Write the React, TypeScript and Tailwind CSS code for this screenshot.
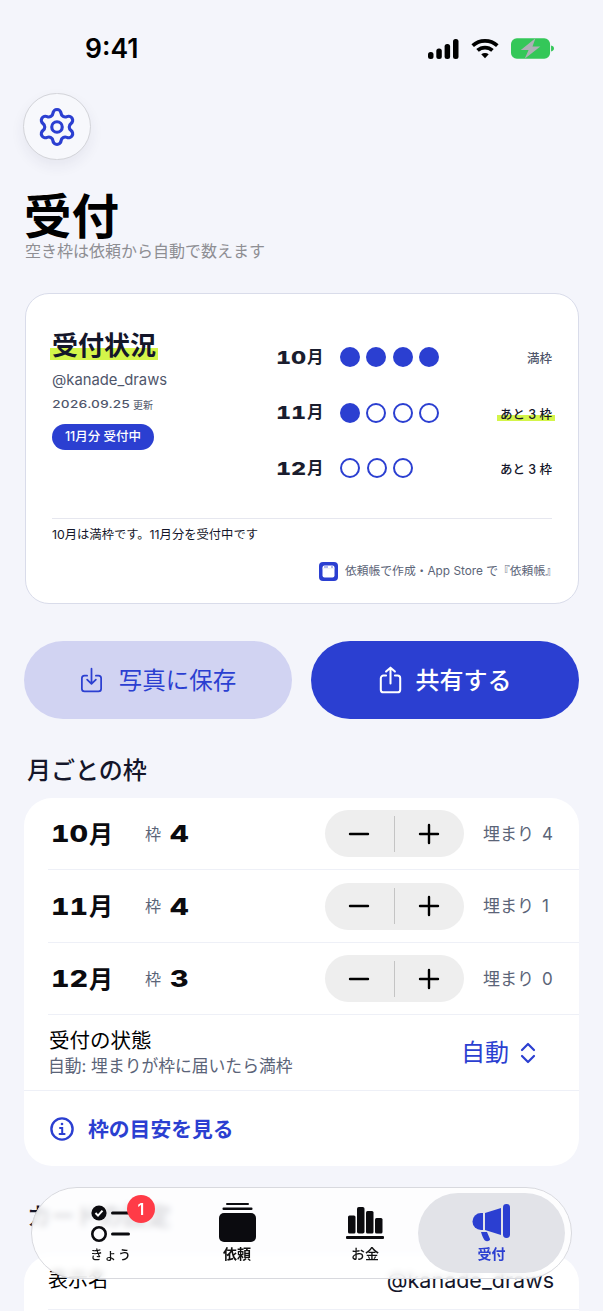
import React from "react";
import { Settings } from "lucide-react";

const sans = "font-['Inter','Noto_Sans_CJK_JP',sans-serif]";

function StatusBar() {
  return (
    <div className="h-[93px] flex items-start justify-between pl-[85px] pr-[49px] pt-[33px]">
      <span className="text-[26.5px] leading-[30px] font-semibold text-black">9:41</span>
      <div className="flex items-center gap-[12px] pt-[5px]">
        <svg width="31" height="20" viewBox="0 0 31 20" fill="#000">
          <rect x="0" y="13" width="5.5" height="7" rx="2.5" />
          <rect x="8.3" y="9.5" width="5.5" height="10.5" rx="2.5" />
          <rect x="16.6" y="5" width="5.5" height="15" rx="2.5" />
          <rect x="25" y="0" width="5.5" height="20" rx="2.5" />
        </svg>
        <svg width="28" height="21" viewBox="0 0 30 21" fill="none" stroke="#000" strokeWidth="4" strokeLinecap="butt">
          <path d="M1.8 7.4C9.2 .6 20.8 .6 28.2 7.4" />
          <path d="M7 12.6c4.6-4.2 11.4-4.2 16 0" />
          <path d="M11 16.6 15 21l4-4.4c-2.4-1.8-5.6-1.8-8 0z" fill="#000" stroke="none" />
        </svg>
        <svg width="43" height="21" viewBox="0 0 44 21">
          <rect x="0" y="0" width="40" height="21" rx="6" fill="#34c759" />
          <path d="M41 7.5c2 .4 3 1.6 3 3s-1 2.6-3 3z" fill="#34c759" />
          <path d="M25 0 10 12h8L14 21 30 8.5h-8z" fill="#aeb0b6" />
        </svg>
      </div>
    </div>
  );
}

function Dots({ filled, total }: { filled: number; total: number }) {
  return (
    <div className="flex gap-[6.5px] w-[99px]">
      {Array.from({ length: total }).map((_, i) =>
        i < filled ? (
          <span key={i} className="w-[20px] h-[20px] rounded-full bg-[#2b3fd1]" />
        ) : (
          <span key={i} className="w-[20px] h-[20px] rounded-full border-2 border-[#2b3fd1]" />
        )
      )}
    </div>
  );
}

function CardRow({ digits, filled, total, children }: { digits: string; filled: number; total: number; children: React.ReactNode }) {
  return (
    <div className="flex items-center h-[28px]">
      <div className="w-[64px] flex items-center text-[#1a1d2e] font-extrabold">
        <span className="inline-block w-[31px] origin-left scale-x-[1.3] text-[18px] tabular-nums">{digits}</span>
        <span className="text-[16.5px] font-bold">月</span>
      </div>
      <Dots filled={filled} total={total} />
      <div className="ml-auto">{children}</div>
    </div>
  );
}

function Stepper() {
  return (
    <div className="w-[139px] h-[47px] rounded-full bg-[#eeeeee] flex items-center">
      <div className="flex-1 flex justify-center pr-[2px]">
        <svg width="22" height="22" viewBox="0 0 22 22" stroke="#000" strokeWidth="2.4" strokeLinecap="round">
          <path d="M2 11h18" />
        </svg>
      </div>
      <div className="w-px h-[36px] bg-[#c4c4c4]" />
      <div className="flex-1 flex justify-center pr-[2px]">
        <svg width="22" height="22" viewBox="0 0 22 22" stroke="#000" strokeWidth="2.4" strokeLinecap="round">
          <path d="M2 11h18M11 2v18" />
        </svg>
      </div>
    </div>
  );
}

function MonthRow({ digits, cap, used, h }: { digits: string; cap: number; used: number; h: string }) {
  return (
    <div className={`${h} ml-[24px] flex items-center border-b border-[#eef0f7]`}>
      <div className="w-[97px] pl-[3px] pt-[2px] flex items-center text-[#0b0b0f] font-extrabold">
        <span className="inline-block w-[38px] origin-left scale-x-[1.25] text-[23px] tabular-nums">{digits}</span>
        <span className="text-[24px] font-bold">月</span>
      </div>
      <span className="text-[16px] text-[#5b6478] w-[25px]">枠</span>
      <span className="inline-block w-[155px] pt-[2px] origin-left scale-x-[1.25] text-[23px] font-extrabold text-[#0b0b0f] tabular-nums">{cap}</span>
      <Stepper />
      <div className="ml-[19px] pt-[2px] flex gap-[8px] text-[17px] text-[#5b6478] whitespace-nowrap">
        <span>埋まり</span>
        <span>{used}</span>
      </div>
    </div>
  );
}

function BottomNav() {
  return (
    <div className="absolute left-[31px] top-[1187px] w-[541px] h-[92px] rounded-full border border-[#d8d9de] bg-white/80 backdrop-blur-[3px] flex items-center">
      <div className="relative w-[140px] h-full flex flex-col items-center pt-[17px] pl-[18px]">
        <svg width="40" height="38" viewBox="0 0 40 38">
          <circle cx="8" cy="8" r="7.6" fill="#0b0b0f" />
          <path d="M4.5 8 7 10.6 11.5 5.6" fill="none" stroke="#fff" strokeWidth="2" />
          <rect x="20" y="6.5" width="19" height="3" rx="1.5" fill="#0b0b0f" />
          <circle cx="8" cy="29" r="6.7" fill="none" stroke="#0b0b0f" strokeWidth="2.6" />
          <rect x="20" y="27.5" width="19" height="3" rx="1.5" fill="#0b0b0f" />
        </svg>
        <span className="text-[13px] leading-[16px] font-medium text-[#111] mt-[3px] tracking-[1px]">きょう</span>
        <span className="absolute left-[95px] top-[7px] w-[28px] h-[28px] rounded-full bg-[#ff3b47] text-white text-[16px] font-semibold flex items-center justify-center">1</span>
      </div>
      <div className="w-[130px] h-full flex flex-col items-center pt-[15px]">
        <svg width="37" height="40" viewBox="0 0 37 40" fill="#0b0b0f">
          <rect x="7" y="0" width="23" height="2" rx="1" />
          <rect x="3.5" y="4.5" width="30" height="2.4" rx="1" />
          <rect x="0" y="10" width="37" height="29" rx="5" />
        </svg>
        <span className="text-[14px] leading-[16px] font-semibold text-[#111] mt-[3px]">依頼</span>
      </div>
      <div className="w-[116px] h-full flex flex-col items-center pt-[19px] pl-[10px]">
        <svg width="38" height="33" viewBox="0 0 38 33" fill="#0b0b0f">
          <rect x="2" y="8.5" width="7.5" height="18" rx="1.5" />
          <rect x="11" y="0" width="7.5" height="26.5" rx="1.8" />
          <rect x="20" y="4" width="7.5" height="22.5" rx="1.5" />
          <rect x="29" y="11" width="7.5" height="15.5" rx="1.5" />
          <rect x="0" y="29" width="38" height="3" rx="1" />
        </svg>
        <span className="text-[14px] leading-[16px] font-medium text-[#111] mt-[6px]">お金</span>
      </div>
      <div className="w-[147px] h-[80px] rounded-full bg-[#e2e3e8] flex flex-col items-center pt-[11px]">
        <svg width="39" height="38" viewBox="0 0 39 38" fill="#2b3fd1">
          <path d="M11 9H9a8.5 8.5 0 0 0 0 17h2z" />
          <path d="M13 9 29 4v27L13 26z" />
          <rect x="31" y="0" width="7" height="34" rx="3.4" />
          <path d="M9 28h6l3 7c.5 2-3.5 3-5 1.5-1.2-1-3-5-4-8.5z" />
        </svg>
        <span className="text-[14px] leading-[16px] font-semibold text-[#2b3fd1] mt-[4px]">受付</span>
      </div>
    </div>
  );
}

const mark = "bg-[linear-gradient(transparent_55%,#d4f54a_55%,#d4f54a_95%,transparent_95%)]";

export default function App() {
  return (
    <div className={`${sans} relative w-[603px] h-[1311px] overflow-hidden bg-[#f4f5fb]`}>
      <StatusBar />
      <div className="px-[24px]">
        <div className="-ml-px w-[68px] h-[67px] rounded-full border border-[#d3d4d9] bg-[#f7f8fc] flex items-center justify-center shadow-[0_6px_14px_rgba(40,45,90,0.07)]">
          <Settings size={42} strokeWidth={1.8} color="#2b3fd1" className="mr-px" />
        </div>
        <h1 className="mt-[33px] text-[47.5px] leading-[47px] font-bold text-black">受付</h1>
        <p className="mt-[2px] ml-px text-[16px] leading-[18px] text-[#8e8e93]">空き枠は依頼から自動で数えます</p>

        {/* Card */}
        <div className="mt-[33px] ml-px w-[554px] h-[311px] rounded-[24px] bg-white border border-[#d9dcea] px-[26px] pt-[37px]">
          <div className="flex h-[188px] border-b border-[#e6e7ef]">
            <div className="w-[224px] flex flex-col items-start">
              <h2 className={`-mt-[1px] text-[26px] leading-[32px] font-semibold text-[#14162a] -mx-[2px] px-[2px] ${mark}`}>受付状況</h2>
              <span className="mt-[8px] text-[14.8px] leading-[20px] text-[#4f566b]">@kanade_draws</span>
              <div className="mt-[8px] flex items-center h-[14px] text-[10px] text-[#4f566b]">
                <span className="inline-block w-[81px] origin-left scale-x-[1.3] text-[10.5px] font-medium tabular-nums">2026.09.25</span>
                <span>更新</span>
              </div>
              <span className="mt-[12px] h-[26px] w-[102px] justify-center rounded-full bg-[#2b3fd1] text-white text-[12.5px] font-medium flex items-center">11月分 受付中</span>
            </div>
            <div className="flex-1 flex flex-col gap-[27.5px] pt-[12px]">
              <CardRow digits="10" filled={4} total={4}>
                <span className="text-[12.5px] font-medium text-[#4f566b]">満枠</span>
              </CardRow>
              <CardRow digits="11" filled={1} total={4}>
                <span className={`text-[12.5px] font-medium text-[#14162a] px-[3px] -mr-[3px] whitespace-nowrap ${mark}`}>あと 3 枠</span>
              </CardRow>
              <CardRow digits="12" filled={0} total={3}>
                <span className="text-[12.5px] font-medium text-[#14162a] whitespace-nowrap">あと 3 枠</span>
              </CardRow>
            </div>
          </div>
          <p className="mt-[8px] text-[12.3px] leading-[16px] text-[#14162a]">10月は満枠です。11月分を受付中です</p>
          <div className="mt-[19px] -mr-[5px] flex items-center justify-end gap-[7px]">
            <svg width="19" height="19" viewBox="0 0 19 19">
              <rect width="19" height="19" rx="4" fill="#2b3fd1" />
              <rect x="3.5" y="3.5" width="12" height="12" rx="2" fill="#fff" />
              <rect x="3.5" y="6.5" width="12" height="0.6" fill="#dfe1ec" />
              <circle cx="6" cy="5" r="0.7" fill="#2b3fd1" />
              <circle cx="8" cy="5" r="0.7" fill="#2b3fd1" />
              <circle cx="13" cy="5" r="0.7" fill="#2b3fd1" />
            </svg>
            <span className="text-[11.8px] text-[#5b6478] whitespace-nowrap">依頼帳で作成・App Store で『依頼帳』</span>
          </div>
        </div>

        {/* Buttons */}
        <div className="mt-[37px] flex gap-[19px]">
          <button className="w-[268px] h-[78px] rounded-full bg-[#d1d3f2] flex items-center justify-center gap-[16px] text-[#2b3fd1]">
            <svg width="23" height="28" viewBox="0 0 26 32" fill="none" stroke="currentColor" strokeWidth="2" strokeLinecap="round" strokeLinejoin="round">
              <path d="M8 11H5a3 3 0 0 0-3 3v12a3 3 0 0 0 3 3h16a3 3 0 0 0 3-3V14a3 3 0 0 0-3-3h-3" />
              <path d="M13 3v17M8 15.5l5 5 5-5" />
            </svg>
            <span className="text-[23.5px] font-normal pt-[2px]">写真に保存</span>
          </button>
          <button className="w-[268px] h-[78px] rounded-full bg-[#2b3fd1] flex items-center justify-center gap-[14px] text-white">
            <svg width="23" height="30" viewBox="0 0 26 34" fill="none" stroke="currentColor" strokeWidth="2.3" strokeLinecap="round" strokeLinejoin="round">
              <path d="M8 12H5a3 3 0 0 0-3 3v13a3 3 0 0 0 3 3h16a3 3 0 0 0 3-3V15a3 3 0 0 0-3-3h-3" />
              <path d="M13 21V3M8 7.5 13 3l5 4.5" />
            </svg>
            <span className="text-[24px] font-medium pt-[2px]">共有する</span>
          </button>
        </div>

        <h3 className="mt-[36px] ml-[3px] text-[24px] leading-[32px] font-medium text-[#14162a]">月ごとの枠</h3>
        <div className="mt-[11px] w-[555px] h-[368px] rounded-[28px] bg-white">
          <MonthRow digits="10" cap={4} used={4} h="h-[72px]" />
          <MonthRow digits="11" cap={4} used={1} h="h-[73px]" />
          <MonthRow digits="12" cap={3} used={0} h="h-[72px]" />
          <div className="h-[76px] flex items-center justify-between border-b border-[#eef0f7] pl-[24px] pr-[43px]">
            <div className="flex flex-col">
              <span className="text-[20.5px] leading-[26px] text-black pl-px">受付の状態</span>
              <span className="text-[16.8px] leading-[24px] text-[#5b6478]">自動: 埋まりが枠に届いたら満枠</span>
            </div>
            <div className="flex items-center gap-[11px] text-[#2b3fd1]">
              <span className="text-[24px]">自動</span>
              <svg width="16" height="22" viewBox="0 0 16 22" fill="none" stroke="currentColor" strokeWidth="2.2" strokeLinecap="round" strokeLinejoin="round">
                <path d="M2 8 8 2l6 6M2 14l6 6 6-6" />
              </svg>
            </div>
          </div>
          <div className="h-[75px] flex items-center pl-[26px] gap-[14px] text-[#2b3fd1]">
            <svg width="24" height="24" viewBox="0 0 24 24" fill="none" stroke="currentColor" strokeWidth="2.4" strokeLinecap="round">
              <circle cx="12" cy="12" r="10.6" />
              <path d="M10 11h2.2v6M9.6 17h5" strokeWidth="2" />
              <circle cx="12" cy="7" r="1.3" fill="currentColor" stroke="none" />
            </svg>
            <span className="text-[20.8px] font-semibold pt-[2px]">枠の目安を見る</span>
          </div>
        </div>

        <h3 className="mt-[35px] ml-[3px] text-[24px] leading-[32px] font-medium text-[#14162a]">カードの設定</h3>
        <div className="mt-[22px] w-[555px] h-[200px] rounded-[28px] bg-white">
          <div className="h-[55px] ml-[24px] pr-[25px] pb-[5px] flex items-center justify-between border-b border-[#eef0f7]">
            <span className="text-[20px] leading-[26px] text-black">表示名</span>
            <span className="text-[21.5px] leading-[26px] text-[#14162a]">@kanade_draws</span>
          </div>
        </div>
      </div>
      <BottomNav />
    </div>
  );
}
